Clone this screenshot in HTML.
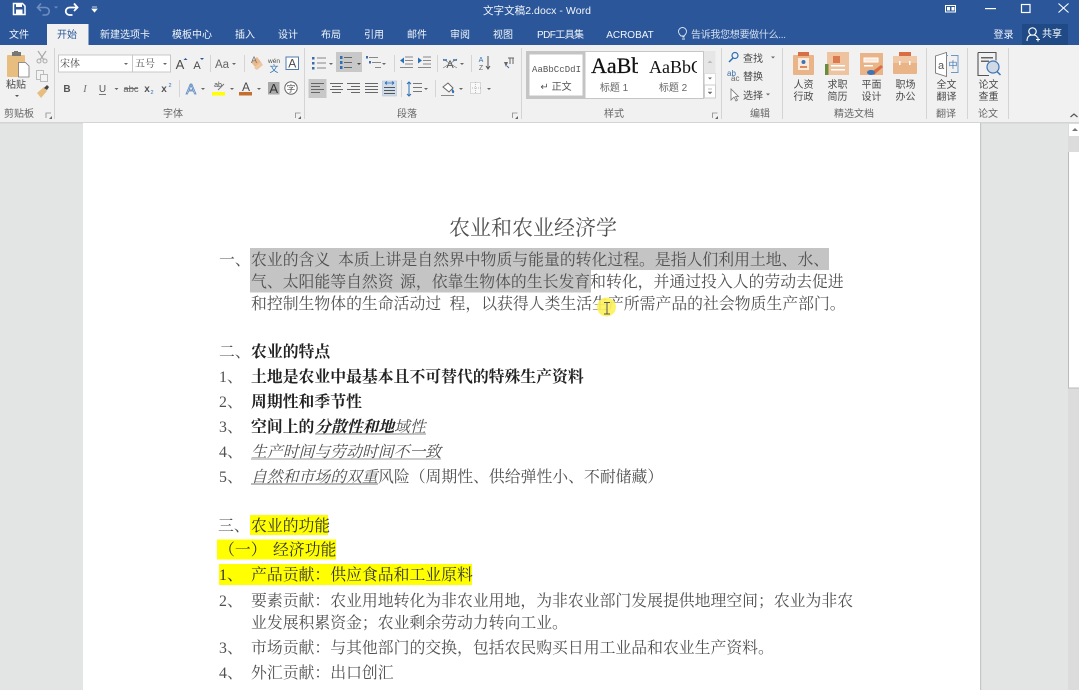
<!DOCTYPE html>
<html lang="zh"><head><meta charset="utf-8"><title>文字文稿2.docx - Word</title>
<style>
html,body{margin:0;padding:0;width:1079px;height:690px;overflow:hidden;background:#e3e5e5}
#p{display:block;position:absolute;left:0;top:0;filter:blur(.35px)}
text{white-space:pre}
.s{font-family:"Liberation Sans","Noto Sans CJK SC",sans-serif;font-size:10px;fill:#4a4a4a}
.m{text-anchor:middle}
.w{fill:#f2f5fa}
.g{fill:#666}
.b{font-family:"Liberation Serif","Noto Serif CJK SC",serif;font-size:15.85px;fill:#505050}
.k{fill:#222;font-weight:700}
.d{fill:#333}
.i{font-style:italic}
</style></head><body>
<svg id="p" width="1079" height="690" viewBox="0 0 1079 690" xmlns="http://www.w3.org/2000/svg">
<defs><clipPath id="c1"><rect x="586" y="52" width="52" height="30"/></clipPath><clipPath id="c2"><rect x="645" y="52" width="52" height="30"/></clipPath></defs>
<!-- backgrounds -->
<rect width="1079" height="690" fill="#e3e5e5"/>
<rect width="1079" height="45" fill="#2b579a"/>
<rect y="45" width="1079" height="77" fill="#f1f1f1"/>
<rect y="122" width="1079" height="1.5" fill="#d4d4d4"/>
<rect x="83" y="123" width="897" height="567" fill="#fff"/>
<rect x="980" y="123" width="1.2" height="567" fill="#c6c6c6"/>
<rect x="1068" y="123" width="11" height="567" fill="#dcdcdc"/>
<rect x="1069" y="124" width="10" height="12" fill="#fff"/>
<rect x="1069" y="152" width="10" height="236" fill="#fff"/>
<path d="M1068.5 152V388H1079" fill="none" stroke="#bbb"/>
<path d="M1072 131l3-3 3 3z" fill="#777"/>

<!-- title bar -->
<path d="M13.500 3.500h9l2.500 2.500v8.500h-11.500z" fill="none" stroke="#fff" stroke-width="1.500"/><rect x="16" y="3.500" width="6" height="3.500" fill="#fff"/><rect x="16" y="9.500" width="6.500" height="5" fill="#fff"/>
<path d="M38 7.500h7.500a3.500 3.500 0 0 1 0 7.500h-3M41 3.500l-3.500 4 3.500 3.500" fill="none" stroke="#6f8fc0" stroke-width="1.600"/><path d="M54 6.500h4l-2 2z" fill="#6f8fc0"/>
<path d="M77 7.500h-7.500a3.500 3.500 0 0 0 0 7.500h3M74 3.500l3.500 4-3.500 3.500" fill="none" stroke="#fff" stroke-width="1.800"/>
<path d="M92 7h5M92 9h5l-2.500 3z" stroke="#fff" stroke-width=".8" fill="#fff"/>
<text x="537" y="14" class="s w m" textLength="108" style="font-size:10.500px">文字文稿2.docx - Word</text>
<rect x="945.500" y="5.500" width="10" height="6.500" fill="none" stroke="#fff"/><rect x="947" y="7" width="3" height="3.500" fill="#fff"/><rect x="951.500" y="7" width="3" height="3.500" fill="#fff"/>
<rect x="985" y="8" width="11" height="1.200" fill="#fff"/>
<rect x="1021.500" y="4.500" width="8.500" height="8" fill="none" stroke="#fff" stroke-width="1.200"/>
<path d="M1058.500 3.500l10 9M1068.500 3.500l-10 9" stroke="#fff" stroke-width="1.100"/>

<!-- tabs -->
<rect x="47" y="24" width="41.500" height="21" fill="#f1f1f1"/>
<text x="19" y="38" class="s w m">文件</text>
<text x="67" y="38" class="s m" style="fill:#2b579a">开始</text>
<text x="125" y="38" class="s w m">新建选项卡</text>
<text x="192" y="38" class="s w m">模板中心</text>
<text x="245" y="38" class="s w m">插入</text>
<text x="288" y="38" class="s w m">设计</text>
<text x="331" y="38" class="s w m">布局</text>
<text x="374" y="38" class="s w m">引用</text>
<text x="417" y="38" class="s w m">邮件</text>
<text x="460" y="38" class="s w m">审阅</text>
<text x="503" y="38" class="s w m">视图</text>
<text x="560.500" y="38" class="s w m" textLength="47">PDF工具集</text>
<text x="630" y="38" class="s w m">ACROBAT</text>
<path d="M682 39h3M682.500 37h2M681 36c-2-2-2.500-3.500-2.500-4.500a4 4 0 0 1 8 0c0 1-.5 2.500-2.500 4.500z" fill="none" stroke="#dfe7f3" stroke-width=".9"/>
<text x="691" y="38" class="s" style="fill:#d5dfee" textLength="95">告诉我您想要做什么...</text>
<text x="1003.500" y="38" class="s w m">登录</text>
<rect x="1022" y="24" width="46" height="21" fill="#1f4a86"/>
<circle cx="1032.500" cy="31.500" r="3.700" fill="none" stroke="#fff" stroke-width="1.200"/><path d="M1027 41c0-4 2-6 5.500-6s4 1 5 2.500M1036 39.500h4M1038 37.500v4" fill="none" stroke="#fff" stroke-width="1.100"/>
<text x="1052" y="37" class="s m" style="fill:#fff">共享</text>

<!-- group separators -->
<g fill="#d4d4d4"><rect x="54" y="48" width="1" height="71"/><rect x="304" y="48" width="1" height="71"/><rect x="521" y="48" width="1" height="71"/><rect x="721" y="48" width="1" height="71"/><rect x="782" y="48" width="1" height="71"/><rect x="926" y="48" width="1" height="71"/><rect x="967" y="48" width="1" height="71"/><rect x="1008" y="48" width="1" height="71"/>
<rect x="210" y="55" width="1" height="17"/><rect x="244" y="55" width="1" height="17"/><rect x="179" y="80" width="1" height="17"/><rect x="394" y="55" width="1" height="17"/><rect x="437" y="55" width="1" height="17"/><rect x="471" y="55" width="1" height="17"/><rect x="401" y="80" width="1" height="17"/><rect x="435" y="80" width="1" height="17"/></g>
<!-- group labels -->
<g><text x="19" y="117" class="s g m">剪贴板</text><text x="173" y="117" class="s g m">字体</text><text x="407" y="117" class="s g m">段落</text><text x="614" y="117" class="s g m">样式</text><text x="760" y="117" class="s g m">编辑</text><text x="854" y="117" class="s g m">精选文档</text><text x="946" y="117" class="s g m">翻译</text><text x="988" y="117" class="s g m">论文</text></g>
<g fill="none" stroke="#888" stroke-width=".8"><path d="M46 118v-5h5M295.500 118v-5h5"/><path d="M512.500 118v-5h5M712.500 118v-5h5"/></g>
<g fill="#666"><path d="M49 119h3v-3zM298 119h3v-3zM515 119h3v-3zM715 119h3v-3z"/></g>
<path d="M1070.500 117l3.500-3 3.500 3" fill="none" stroke="#555" stroke-width="1.200"/>

<!-- clipboard -->
<rect x="7" y="55" width="18" height="22" rx="1" fill="#e8bd80"/><rect x="12" y="52" width="9" height="4" fill="#777"/><rect x="14" y="51" width="4" height="2" fill="#777"/>
<path d="M18.500 62.500h7l3.500 3.500v11h-10.500z" fill="#fff" stroke="#777" stroke-width=".8"/>
<text x="16" y="88" class="s m">粘贴</text>
<path d="M15 95h4l-2 2z" fill="#555"/>
<path d="M38 51l6 9M46 51l-6 9" stroke="#aaa" stroke-width="1.200"/><circle cx="39" cy="61" r="2" fill="none" stroke="#aaa"/><circle cx="45" cy="61" r="2" fill="none" stroke="#aaa"/>
<rect x="36.500" y="70.500" width="7" height="9" fill="#f3f3f3" stroke="#bbb"/><rect x="40.500" y="74.500" width="7" height="7" fill="#f3f3f3" stroke="#bbb"/>
<path d="M37 93l7-6 3 4-6 7z" fill="#e8bd80"/><path d="M44 88l3-3 2 2-2 3z" fill="#444"/>

<!-- font boxes -->
<rect x="58.500" y="55" width="74" height="17" fill="#fff" stroke="#c8c8c8"/><rect x="132.500" y="55" width="38" height="17" fill="#fff" stroke="#c8c8c8"/>
<text x="60" y="67" class="s" style="font-family:'Noto Serif CJK SC',serif">宋体</text>
<text x="135" y="67" class="s" style="font-family:'Noto Serif CJK SC',serif">五号</text>
<path d="M124 63h4l-2 2zM163 63h4l-2 2z" fill="#666"/>
<text x="180" y="69" class="s m" style="font-size:13px">A</text><path d="M183.500 60l2-2 2 2z" fill="#2b579a"/>
<text x="197" y="69" class="s m" style="font-size:11px">A</text><path d="M200 58h4l-2 2z" fill="#2b579a"/>
<text x="222" y="68" class="s m" style="font-size:11.500px;fill:#666">Aa</text><path d="M232 63h4l-2 2z" fill="#666"/>
<path d="M251 62l6-5 4 5-6 5z" fill="#e9b98c"/><path d="M254 68l7-6 2 3-6 5z" fill="#eec6a0"/><text x="254" y="63" class="s m" style="font-size:9px;fill:#777">A</text>
<text x="274" y="63" class="s m" style="font-size:6.500px">wén</text><text x="274" y="72" class="s m" style="font-size:9px;fill:#2b6fb5">文</text>
<rect x="286" y="57" width="12.500" height="12.500" fill="#fff" stroke="#4f7cae"/><text x="292.300" y="67.500" class="s m" style="font-size:12px">A</text>

<!-- font row 2 -->
<text x="67" y="92" class="s m" style="font-weight:700;fill:#555">B</text>
<text x="85" y="92" class="s m" style="font-style:italic;font-family:'Liberation Serif';font-size:11px;fill:#777">I</text>
<text x="102.500" y="92" class="s m" style="fill:#555">U</text><rect x="99" y="94" width="7" height="1" fill="#777"/><path d="M114.500 88h4l-2 2z" fill="#666"/>
<text x="131" y="92" class="s m" style="fill:#666;font-size:9.500px">abc</text><rect x="124" y="88" width="14" height=".9" fill="#666"/>
<text x="147" y="92" class="s m" style="font-weight:700;fill:#555">x</text><text x="152" y="94" class="s m" style="font-size:5.500px;fill:#2b6fb5">2</text>
<text x="164" y="92" class="s m" style="font-weight:700;fill:#555">x</text><text x="170" y="87" class="s m" style="font-size:5.500px;fill:#2b6fb5">2</text>
<text x="191" y="94" class="s m" style="font-size:15px;fill:#dfe9f5;stroke:#5d8ac0;stroke-width:.8">A</text><path d="M201 88h4l-2 2z" fill="#666"/>
<text x="218" y="87" class="s m" style="font-size:7px">ab</text><path d="M218 90l6-6" stroke="#777"/>
<rect x="212" y="92" width="13" height="3.500" fill="#ff0"/><path d="M230 88h4l-2 2z" fill="#666"/>
<text x="246" y="91" class="s m" style="font-size:12px">A</text><rect x="239" y="92" width="13" height="3.500" fill="#c56f2e"/><path d="M257 88h4l-2 2z" fill="#666"/>
<rect x="268" y="82" width="11.500" height="12.500" fill="#a9a9a9"/><text x="273.700" y="93" class="s m" style="font-size:13px;fill:#333">A</text>
<circle cx="291" cy="88" r="6.200" fill="#fff" stroke="#666"/><text x="291" y="91.500" class="s m" style="font-size:8.500px">字</text>

<!-- paragraph row 1 -->
<g fill="#3b6ea8"><rect x="312" y="57" width="2.500" height="2.500"/><rect x="312" y="62" width="2.500" height="2.500"/><rect x="312" y="67" width="2.500" height="2.500"/></g>
<g fill="#888"><rect x="317" y="57.500" width="9" height="1"/><rect x="317" y="62.500" width="9" height="1"/><rect x="317" y="67.500" width="9" height="1"/></g>
<path d="M329 63h4l-2 2z" fill="#666"/>
<rect x="336" y="52" width="26" height="20" fill="#c8c8c8"/>
<g fill="#2b6fb5"><rect x="340" y="56" width="2.500" height="3"/><rect x="340" y="61" width="2.500" height="3"/><rect x="340" y="66" width="2.500" height="3"/></g>
<g fill="#666"><rect x="344" y="57" width="8" height="1"/><rect x="344" y="62" width="8" height="1"/><rect x="344" y="67" width="8" height="1"/></g><path d="M357 63h4l-2 2z" fill="#444"/>
<g fill="#888"><rect x="369" y="57" width="9" height="1"/><rect x="372" y="62" width="9" height="1"/><rect x="375" y="67" width="6" height="1"/></g><g fill="#3b6ea8"><rect x="366" y="56" width="2" height="2.500"/><rect x="369" y="61" width="2" height="2.500"/></g><path d="M382 63h4l-2 2z" fill="#666"/>
<g fill="#888"><rect x="405" y="56.500" width="8" height="1"/><rect x="405" y="60" width="8" height="1"/><rect x="405" y="63.500" width="8" height="1"/><rect x="400" y="67" width="13" height="1"/><rect x="418" y="67" width="13" height="1"/><rect x="423" y="56.500" width="8" height="1"/><rect x="423" y="60" width="8" height="1"/><rect x="423" y="63.500" width="8" height="1"/></g>
<path d="M400 60.500l4-3v6zM418 57.500l4 3-4 3z" fill="#2b6fb5"/>
<text x="450" y="68" class="s m" style="font-size:11px;fill:#555">A</text><path d="M443 60h4M453 60h4" stroke="#2b6fb5" stroke-width="1.500"/><path d="M443 68l14-9M457 68l-14-9" stroke="#777" stroke-width=".6"/><path d="M460 63h4l-2 2z" fill="#666"/>
<text x="481" y="62" class="s m" style="font-size:7px;fill:#2b6fb5">A</text><text x="481" y="70" class="s m" style="font-size:7px;fill:#666">Z</text><path d="M488 56v13M486 66l2 3 2-3" fill="none" stroke="#555"/>
<path d="M510 58v6M513 58v6M508 58h6" stroke="#666" fill="none"/><path d="M504 62h4l-2 5z" fill="#666"/><path d="M507 66l2 2" stroke="#2b6fb5"/>

<!-- paragraph row 2 -->
<rect x="308.500" y="79" width="18" height="19" fill="#c8c8c8"/>
<g fill="#666"><rect x="311" y="83" width="13" height="1"/><rect x="311" y="86" width="9" height="1"/><rect x="311" y="89" width="13" height="1"/><rect x="311" y="92" width="9" height="1"/>
<rect x="330" y="83" width="13" height="1"/><rect x="332" y="86" width="9" height="1"/><rect x="330" y="89" width="13" height="1"/><rect x="332" y="92" width="9" height="1"/>
<rect x="347" y="83" width="13" height="1"/><rect x="351" y="86" width="9" height="1"/><rect x="347" y="89" width="13" height="1"/><rect x="351" y="92" width="9" height="1"/>
<rect x="365" y="83" width="13" height="1"/><rect x="365" y="86" width="13" height="1"/><rect x="365" y="89" width="13" height="1"/><rect x="365" y="92" width="13" height="1"/></g>
<rect x="382.500" y="81" width="14" height="15" fill="#cfdcec" stroke="#b7c4d4" stroke-width=".6"/>
<g fill="#555"><rect x="384" y="87" width="11" height="1"/><rect x="384" y="90" width="11" height="1"/><rect x="384" y="93" width="11" height="1"/></g><path d="M385 83h9M385 83l2-1.500M385 83l2 1.500M394 83l-2-1.500M394 83l-2 1.500" stroke="#2b6fb5" stroke-width=".8"/>
<path d="M409 82v14M407 84l2-2 2 2M407 94l2 2 2-2" fill="none" stroke="#2b6fb5"/><g fill="#777"><rect x="413" y="83" width="9" height="1"/><rect x="413" y="87" width="9" height="1"/><rect x="413" y="91" width="9" height="1"/></g><path d="M424 88h4l-2 2z" fill="#666"/>
<path d="M443 87l5-4 5 5-4 4z" fill="#fff" stroke="#666"/><path d="M452 89c2 1 3 3 1.500 4s-2-2-1.500-4z" fill="#2b6fb5"/><rect x="441" y="95" width="13" height="1" fill="#888"/><path d="M459 88h4l-2 2z" fill="#666"/>
<rect x="470.500" y="82.500" width="10" height="11" fill="#f8f8f8" stroke="#bbb" stroke-dasharray="1 1"/><path d="M475.500 82v12M470 88h11" stroke="#bbb" stroke-dasharray="1 1"/><path d="M487 88h4l-2 2z" fill="#666"/>

<!-- styles gallery -->
<rect x="526.500" y="51.500" width="177" height="47" fill="#fff" stroke="#c6c6c6"/>
<rect x="528" y="53" width="56" height="44" fill="#fff" stroke="#c4c4c4" stroke-width="3"/>
<rect x="704" y="51" width="11.500" height="22" fill="#e6e6e6"/><rect x="704.500" y="73.500" width="11" height="11.500" fill="#fff" stroke="#ddd"/><rect x="704.500" y="85" width="11" height="13" fill="#fff" stroke="#ccc"/>
<path d="M707.500 63l2.500-2.500 2.500 2.500z" fill="#bbb"/><path d="M708 77.500h4l-2 2z" fill="#666"/><path d="M708 89h4M708 92h4l-2 2z" stroke="#777" stroke-width=".5" fill="#666"/>
<text x="532" y="72" style="font-family:'Liberation Mono',monospace;font-size:9px;fill:#555" textLength="49">AaBbCcDdI</text>
<text x="556" y="90" class="s m" style="font-size:10px;fill:#555">↵ 正文</text>
<g clip-path="url(#c1)"><text x="591" y="73" style="font-family:'Liberation Serif',serif;font-size:22px;fill:#111;stroke:#111;stroke-width:.25">AaBb</text></g>
<text x="614" y="91" class="s m" style="fill:#666">标题 1</text>
<g clip-path="url(#c2)"><text x="649" y="73" style="font-family:'Liberation Serif',serif;font-size:18px;fill:#111">AaBbC</text></g>
<text x="673" y="91" class="s m" style="fill:#666">标题 2</text>

<!-- editing -->
<circle cx="735" cy="55.500" r="3" fill="none" stroke="#2b6fb5" stroke-width="1.200"/><path d="M733 58l-4 4" stroke="#2b6fb5" stroke-width="1.500"/>
<text x="743" y="62" class="s">查找</text><path d="M771 56.500h4l-2 2z" fill="#666"/>
<text x="727" y="76" class="s" style="font-size:8px;fill:#3b6ea8">ab</text><text x="731" y="81" class="s" style="font-size:8px;fill:#666">ac</text>
<text x="743" y="80" class="s">替换</text>
<path d="M731 89v11l3-3 2 4 1.500-1-2-3.500h3z" fill="#fff" stroke="#777" stroke-width=".8"/>
<text x="743" y="99" class="s">选择</text><path d="M766 93.500h4l-2 2z" fill="#666"/>

<!-- doc icons -->
<rect x="793" y="55" width="21" height="20" rx="1" fill="#eab489"/><rect x="798" y="52" width="11" height="4" fill="#d96e45"/><rect x="798" y="58" width="11" height="12" fill="#fbeadb"/><circle cx="803.500" cy="62" r="2" fill="#3d74b4"/><rect x="800" y="66" width="7" height="2" fill="#e08a5c"/>
<rect x="827" y="52" width="22" height="23" fill="#eec3a0"/><rect x="825" y="64" width="3.500" height="11" fill="#6d8b3f"/><rect x="833" y="56" width="7" height="7" fill="#dc7a4e"/><rect x="831" y="65" width="14" height="1.500" fill="#fff"/><rect x="831" y="69" width="14" height="1.500" fill="#fff"/>
<rect x="860" y="53" width="23" height="22" fill="#eab489"/><rect x="864" y="58" width="14" height="4" fill="#fbeadb" stroke="#fff"/><rect x="864" y="65" width="9" height="1.500" fill="#fff"/><path d="M870 73l11-8 2 2-9 8z" fill="#d96e45"/><ellipse cx="871" cy="72.500" rx="4" ry="2.500" fill="#3d74b4"/>
<rect x="893" y="56" width="24" height="18" rx="1" fill="#eab489"/><rect x="899" y="52" width="12" height="5" fill="#d96e45"/><rect x="893" y="56" width="24" height="7" fill="#f0c8a5"/><rect x="899" y="61" width="1.500" height="4" fill="#fff"/><rect x="909" y="61" width="1.500" height="4" fill="#fff"/>
<text x="803.500" y="88" class="s m">人资</text><text x="803.500" y="100" class="s m">行政</text>
<text x="837.500" y="88" class="s m">求职</text><text x="837.500" y="100" class="s m">简历</text>
<text x="871.500" y="88" class="s m">平面</text><text x="871.500" y="100" class="s m">设计</text>
<text x="905.500" y="88" class="s m">职场</text><text x="905.500" y="100" class="s m">办公</text>
<path d="M935.500 56l11-3.500v24l-11-3.500z" fill="#fff" stroke="#777" stroke-width=".9"/><path d="M946 55.500h2M951 55.500h7v17h-7" fill="none" stroke="#6e96c4"/>
<text x="941" y="69" class="s m" style="font-size:11px;fill:#555">a</text><text x="953" y="68" class="s m" style="font-size:9px;fill:#3d74b4">中</text>
<text x="946.500" y="88" class="s m">全文</text><text x="946.500" y="100" class="s m">翻译</text>
<path d="M978 52.500h18v8M978 52.500v23h11" fill="none" stroke="#555" stroke-width="1.100"/><rect x="981" y="57" width="12" height="1.500" fill="#666"/><rect x="981" y="60.500" width="8" height="1.500" fill="#666"/>
<circle cx="993" cy="67" r="6" fill="#cfdae6" stroke="#3d74b4" stroke-width="1.200"/><path d="M997 71.500l3.500 3.500" stroke="#3d74b4" stroke-width="1.500"/>
<text x="988.500" y="88" class="s m">论文</text><text x="988.500" y="100" class="s m">查重</text>

<!-- highlights -->
<rect x="250" y="248" width="579" height="22" fill="#c4c4c4"/>
<rect x="250" y="270" width="341" height="22.500" fill="#c4c4c4"/>
<rect x="250" y="515" width="78" height="20" fill="#ff0"/>
<rect x="217" y="539.500" width="119" height="20" fill="#ff0"/>
<rect x="219" y="564" width="253" height="21" fill="#ff0"/>

<!-- document -->
<text x="449" y="235" class="b" style="font-size:21px">农业和农业经济学</text>
<text x="219" y="265" class="b">一、</text><text x="251" y="265" class="b">农业的含义</text><text x="338" y="265" class="b">本质上讲是自然界中物质与能量的转化过程。是指人们利用土地、水、</text>
<text x="251" y="287" class="b">气、太阳能等自然资</text><text x="400" y="287" class="b">源，依靠生物体的生长发育和转化，并通过投入人的劳动去促进</text>
<text x="251" y="309" class="b">和控制生物体的生命活动过</text><text x="449.500" y="309" class="b">程，以获得人类生活生产所需产品的社会物质生产部门。</text>
<text x="219" y="357" class="b">二、</text><text x="251" y="357" class="b k">农业的特点</text>
<text x="219" y="382" class="b">1</text><text x="227" y="382" class="b">、</text><text x="251" y="382" class="b k">土地是农业中最基本且不可替代的特殊生产资料</text>
<text x="219" y="407" class="b">2</text><text x="227" y="407" class="b">、</text><text x="251" y="407" class="b k">周期性和季节性</text>
<text x="219" y="432" class="b">3</text><text x="227" y="432" class="b">、</text><text x="251" y="432" class="b k">空间上的</text><text x="315" y="432" class="b k i">分散性和地</text><text x="394" y="432" class="b i">域性</text>
<rect x="315" y="433.500" width="111" height="1" fill="#888"/>
<text x="219" y="457" class="b">4</text><text x="227" y="457" class="b">、</text><text x="251" y="457" class="b i">生产时间与劳动时间不一致</text>
<rect x="251" y="458.500" width="190" height="1" fill="#999"/>
<text x="219" y="482" class="b">5</text><text x="227" y="482" class="b">、</text><text x="251" y="482" class="b i">自然和市场的双重</text><text x="378" y="482" class="b">风险（周期性、供给弹性小、不耐储藏）</text>
<rect x="251" y="483.500" width="127" height="1" fill="#777"/>
<text x="218" y="531" class="b">三、</text><text x="251" y="531" class="b d">农业的功能</text>
<text x="219" y="555" class="b d">（一）</text><text x="273" y="555" class="b d">经济功能</text>
<text x="219" y="580" class="b d">1</text><text x="227" y="580" class="b d">、</text><text x="251" y="580" class="b d">产品贡献：供应食品和工业原料</text>
<text x="219" y="606" class="b">2</text><text x="227" y="606" class="b">、</text><text x="251" y="606" class="b">要素贡献：农业用地转化为非农业用地，为非农业部门发展提供地理空间；农业为非农</text>
<text x="251" y="628" class="b">业发展积累资金；农业剩余劳动力转向工业。</text>
<text x="219" y="653" class="b">3</text><text x="227" y="653" class="b">、</text><text x="251" y="653" class="b">市场贡献：与其他部门的交换，包括农民购买日用工业品和农业生产资料。</text>
<text x="219" y="678" class="b">4</text><text x="227" y="678" class="b">、</text><text x="251" y="678" class="b">外汇贡献：出口创汇</text>

<!-- cursor -->
<circle cx="606.500" cy="307" r="9.500" fill="#fdf25a" fill-opacity=".9"/>
<path d="M604 302.500h6M604 314h6M607 302.500v11.500" stroke="#555" stroke-width="1" fill="none"/>
</svg>
</body></html>
